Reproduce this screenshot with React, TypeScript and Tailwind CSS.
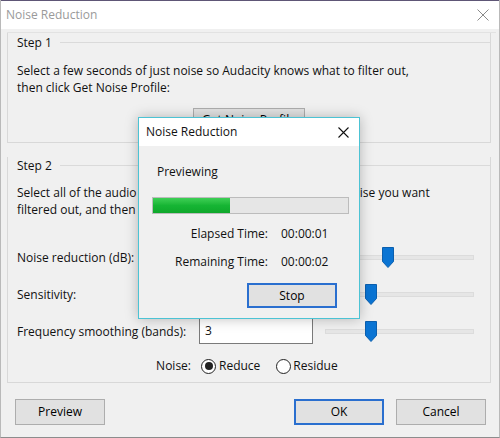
import React from "react";

const F = "font-['Open_Sans','Noto_Sans',sans-serif]";

function Thumb() {
  return (
    <svg width="12" height="21" viewBox="0 0 12 21">
      <path d="M0.5 0.5H11.5V14.5L6 20.5L0.5 14.5Z" fill="#0a74d3" stroke="#0b5fae" />
    </svg>
  );
}

function Slider({ left }: { left: number }) {
  return (
    <div className="relative w-[149px] h-[21px] flex items-center">
      <div className="w-full h-[5px] bg-[#e6e6e6] border border-[#dcdcdc]" />
      <div className="absolute top-0" style={{ left }}>
        <Thumb />
      </div>
    </div>
  );
}

function Btn({ label, primary, w = "w-[90px]", h = "h-[26px]" }: { label: string; primary?: boolean; w?: string; h?: string }) {
  return (
    <div
      className={`${w} ${h} flex items-center justify-center bg-[#e1e1e1] text-[12px] text-black ${
        primary ? "border-2 border-[#2a6fcf]" : "border border-[#adadad]"
      }`}
    >
      {label}
    </div>
  );
}

function Radio({ checked }: { checked?: boolean }) {
  return (
    <div className="w-[15px] h-[15px] rounded-full border border-[#222] bg-white flex items-center justify-center">
      {checked && <div className="w-[8px] h-[8px] rounded-full bg-[#222]" />}
    </div>
  );
}

function Row({ label, value, thumb }: { label: string; value: string; thumb: number }) {
  return (
    <div className="flex items-center h-[26px]">
      <div className="w-[174px] leading-[17px]">{label}</div>
      <div className="ml-[8px] w-[114px] h-[26px] bg-white border border-[#7a7a7a] flex items-center pl-[5px]">
        {value}
      </div>
      <div className="ml-[12px]">
        <Slider left={thumb} />
      </div>
    </div>
  );
}

export default function App() {
  return (
    <div className={`${F} relative w-[500px] h-[438px] bg-[#f0f0f0] border-l border-r border-b border-l-[#b9b9b9] border-r-[#b9b9b9] border-b-[#8c8c8c] overflow-hidden text-[#111] text-[12px]`}>
      {/* title bar */}
      <div className="h-[29px] bg-white border-t border-t-[#5e5676] flex items-center justify-between pl-[5px] pr-[10px]">
        <span className="text-[12px] text-[#9a9a9a]">Noise Reduction</span>
        <svg width="12" height="12" viewBox="0 0 12 12">
          <path d="M0.5 0.5L11.5 11.5M11.5 0.5L0.5 11.5" stroke="#8a8a8a" strokeWidth="1" />
        </svg>
      </div>

      <div className="mt-[3px] ml-[6px] mr-[3px] border-t border-t-[#e2e2e2]">
        {/* Step 1 */}
        <div className="w-[484px] border-l border-r border-b border-[#d8d8d8] pt-[1px] pb-[10px] pl-[9px]">
          <div className="flex items-center h-[17px]">
            <span className="leading-[17px]">Step 1</span>
            <div className="flex-1 h-px bg-[#dadada] ml-[8px]" />
          </div>
          <div className="mt-[11px] leading-[17px]">
            <div>Select a few seconds of just noise so Audacity knows what to filter out,</div>
            <div>then click Get Noise Profile:</div>
          </div>
          <div className="mt-[12px] ml-[176px]">
            <Btn label="Get Noise Profile" w="w-[112px]" h="h-[24px]" />
          </div>
        </div>

        {/* Step 2 */}
        <div className="mt-[14px] w-[484px] border-l border-r border-b border-[#d8d8d8] pb-[6px] pl-[9px]">
          <div className="flex items-center h-[17px]">
            <span className="leading-[17px]">Step 2</span>
            <div className="flex-1 h-px bg-[#dadada] ml-[8px]" />
          </div>
          <div className="mt-[10px] leading-[17px]">
            <div>Select all of the audio you want filtered, choose how much noise you want</div>
            <div>filtered out, and then click 'OK' to reduce noise.</div>
          </div>
          <div className="mt-[26px] flex flex-col gap-[11px]">
            <Row label="Noise reduction (dB):" value="" thumb={57} />
            <Row label="Sensitivity:" value="" thumb={40} />
            <Row label="Frequency smoothing (bands):" value="3" thumb={40} />
          </div>
          <div className="mt-[12px] h-[20px] flex items-center">
            <div className="w-[174px] text-right">Noise:</div>
            <div className="ml-[10px]">
              <Radio checked />
            </div>
            <span className="ml-[3px]">Reduce</span>
            <div className="ml-[16px]">
              <Radio />
            </div>
            <span className="ml-[2px]">Residue</span>
          </div>
        </div>

        {/* bottom buttons */}
        <div className="mt-[16px] flex items-center">
          <div className="ml-[8px]">
            <Btn label="Preview" />
          </div>
          <div className="ml-auto flex gap-[12px] mr-[10px]">
            <Btn label="OK" primary />
            <Btn label="Cancel" />
          </div>
        </div>
      </div>

      {/* progress dialog */}
      <div className="absolute left-[137px] top-[117px] w-[222px] h-[202px] border border-[#4cc3d4] bg-[#f0f0f0] shadow-[0_0_12px_rgba(0,0,0,0.25)] flex flex-col">
        <div className="h-[28px] bg-white flex items-center justify-between pl-[7px] pr-[10px]">
          <span className="text-[12px]">Noise Reduction</span>
          <svg width="11" height="11" viewBox="0 0 11 11">
            <path d="M0.5 0.5L10.5 10.5M10.5 0.5L0.5 10.5" stroke="#111" strokeWidth="1.1" />
          </svg>
        </div>
        <div className="pl-[18px] mt-[17px] leading-[17px]">Previewing</div>
        <div className="ml-[13px] mt-[17px] w-[197px] h-[17px] bg-[#e6e6e6] border border-[#bcbcbc]">
          <div className="h-full w-[77px] bg-gradient-to-b from-[#3ccf55] via-[#16b534] to-[#0fa82b]" />
        </div>
        <div className="mt-[11px] flex leading-[17px]">
          <div className="w-[129px] text-right">Elapsed Time:</div>
          <div className="ml-[13px]">00:00:01</div>
        </div>
        <div className="mt-[11px] flex leading-[17px]">
          <div className="w-[129px] text-right">Remaining Time:</div>
          <div className="ml-[13px]">00:00:02</div>
        </div>
        <div className="mt-[13px] ml-[108px]">
          <Btn label="Stop" primary h="h-[25px]" />
        </div>
      </div>
    </div>
  );
}
